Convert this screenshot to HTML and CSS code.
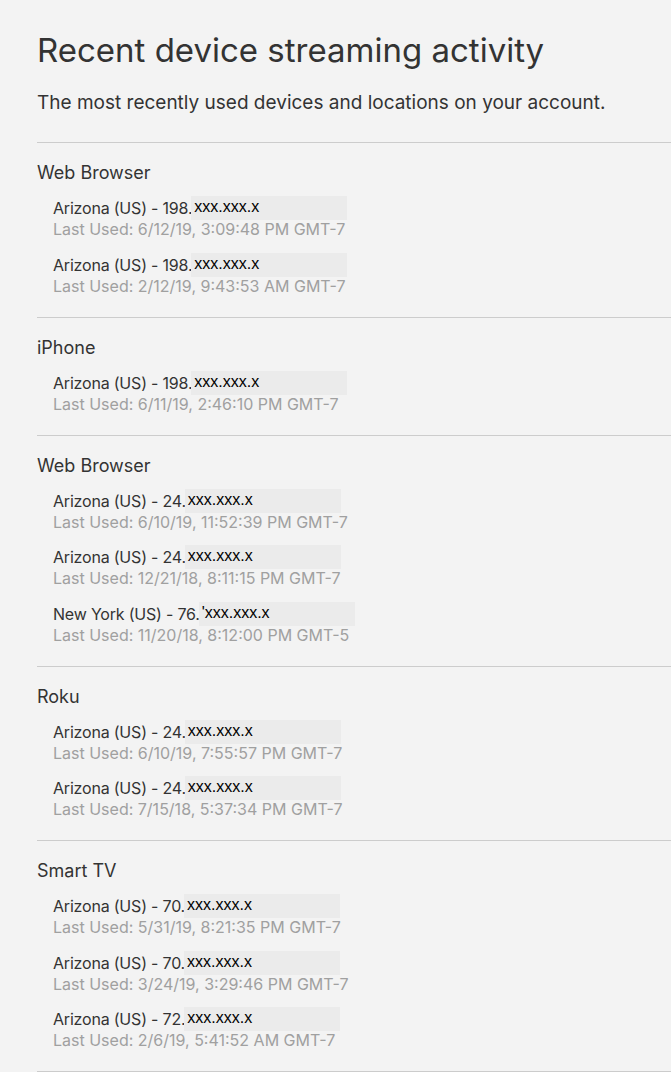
FILE: index.html
```html
<!DOCTYPE html>
<html>

<head>
    <meta charset="utf-8">
    <title>Recent device streaming activity</title>
    <link rel="stylesheet" href="styles.css">
</head>

<body>
    <div class="page">
        <h1>Recent device streaming activity</h1>
        <p class="intro">The most recently used devices and locations on your account.</p>

        <div class="device">
            <div class="device-name">Web Browser</div>
            <ul class="sessions">
                <li>
                    <div class="where">Arizona (US) - 198.<span class="mask">xxx.xxx.x</span></div>
                    <div class="when">Last Used: 6/12/19, 3:09:48 PM GMT-7</div>
                </li>
                <li>
                    <div class="where">Arizona (US) - 198.<span class="mask">xxx.xxx.x</span></div>
                    <div class="when">Last Used: 2/12/19, 9:43:53 AM GMT-7</div>
                </li>
            </ul>
        </div>

        <div class="device">
            <div class="device-name">iPhone</div>
            <ul class="sessions">
                <li>
                    <div class="where">Arizona (US) - 198.<span class="mask">xxx.xxx.x</span></div>
                    <div class="when">Last Used: 6/11/19, 2:46:10 PM GMT-7</div>
                </li>
            </ul>
        </div>

        <div class="device">
            <div class="device-name">Web Browser</div>
            <ul class="sessions">
                <li>
                    <div class="where">Arizona (US) - 24.<span class="mask">xxx.xxx.x</span></div>
                    <div class="when">Last Used: 6/10/19, 11:52:39 PM GMT-7</div>
                </li>
                <li>
                    <div class="where">Arizona (US) - 24.<span class="mask">xxx.xxx.x</span></div>
                    <div class="when">Last Used: 12/21/18, 8:11:15 PM GMT-7</div>
                </li>
                <li>
                    <div class="where">New York (US) - 76.<span class="mask">'xxx.xxx.x</span></div>
                    <div class="when">Last Used: 11/20/18, 8:12:00 PM GMT-5</div>
                </li>
            </ul>
        </div>

        <div class="device">
            <div class="device-name">Roku</div>
            <ul class="sessions">
                <li>
                    <div class="where">Arizona (US) - 24.<span class="mask">xxx.xxx.x</span></div>
                    <div class="when">Last Used: 6/10/19, 7:55:57 PM GMT-7</div>
                </li>
                <li>
                    <div class="where">Arizona (US) - 24.<span class="mask">xxx.xxx.x</span></div>
                    <div class="when">Last Used: 7/15/18, 5:37:34 PM GMT-7</div>
                </li>
            </ul>
        </div>

        <div class="device">
            <div class="device-name">Smart TV</div>
            <ul class="sessions">
                <li>
                    <div class="where">Arizona (US) - 70.<span class="mask">xxx.xxx.x</span></div>
                    <div class="when">Last Used: 5/31/19, 8:21:35 PM GMT-7</div>
                </li>
                <li>
                    <div class="where">Arizona (US) - 70.<span class="mask">xxx.xxx.x</span></div>
                    <div class="when">Last Used: 3/24/19, 3:29:46 PM GMT-7</div>
                </li>
                <li>
                    <div class="where">Arizona (US) - 72.<span class="mask">xxx.xxx.x</span></div>
                    <div class="when">Last Used: 2/6/19, 5:41:52 AM GMT-7</div>
                </li>
            </ul>
        </div>
    </div>
</body>

</html>
```

FILE: styles.css
```css
body {
    margin: 0;
    padding: 0;
    background-color: #f3f3f3;
    color: #333;
    font-family: Inter, "Liberation Sans", sans-serif;
}

.page {
    padding: 26px 0 0 37px;
}

h1 {
    margin: 0;
    font-size: 33px;
    font-weight: 400;
    line-height: 48px;
}

.intro {
    margin: 17px 0 0;
    font-size: 19px;
    line-height: 24px;
    padding-bottom: 27px;
    border-bottom: 1px solid #ccc;
}

.device {
    padding: 19px 0 20px;
    border-bottom: 1px solid #ccc;
}

.device-name {
    font-size: 18px;
    line-height: 22px;
}

.sessions {
    list-style: none;
    margin: 14px 0 0;
    padding: 0 0 0 16px;
    display: flex;
    flex-direction: column;
    gap: 14.5px;
}

.where,
.when {
    font-size: 16px;
    line-height: 21px;
}

.where {
    letter-spacing: -0.2px;
}

.when {
    color: #a0a0a0;
}

.mask {
    display: inline-block;
    vertical-align: top;
    box-sizing: border-box;
    width: 156px;
    height: 24px;
    margin: -2px 0 -1px -1px;
    padding: 0 0 0 3px;
    background-color: #ebebeb;
    color: #000;
    font-family: "Liberation Sans", sans-serif;
    font-size: 16px;
    letter-spacing: 0;
    line-height: 22px;
}
```
